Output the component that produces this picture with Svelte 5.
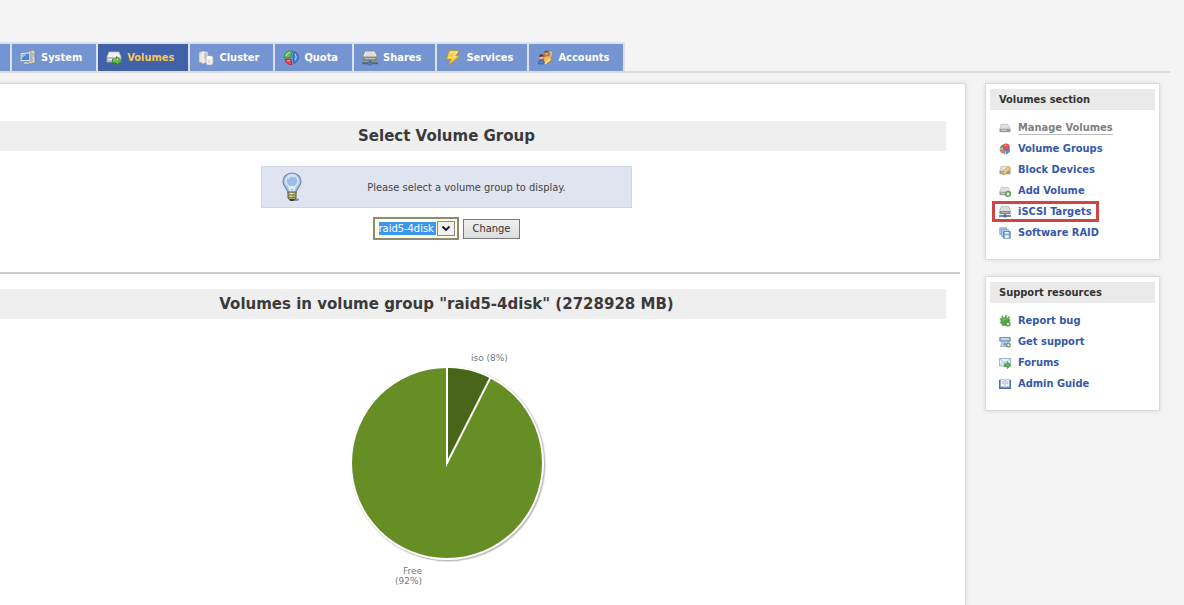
<script lang="ts">
	const tabs = [
		{ label: 'System', icon: 'system' },
		{ label: 'Volumes', icon: 'volumes' },
		{ label: 'Cluster', icon: 'cluster' },
		{ label: 'Quota', icon: 'quota' },
		{ label: 'Shares', icon: 'shares' },
		{ label: 'Services', icon: 'services' },
		{ label: 'Accounts', icon: 'accounts' }
	];

	const sections = [
		{
			title: 'Volumes section',
			links: [
				{ label: 'Manage Volumes', icon: 'drive' },
				{ label: 'Volume Groups', icon: 'groups' },
				{ label: 'Block Devices', icon: 'block' },
				{ label: 'Add Volume', icon: 'add' },
				{ label: 'iSCSI Targets', icon: 'shares' },
				{ label: 'Software RAID', icon: 'raid' }
			]
		},
		{
			title: 'Support resources',
			links: [
				{ label: 'Report bug', icon: 'bug' },
				{ label: 'Get support', icon: 'support' },
				{ label: 'Forums', icon: 'forums' },
				{ label: 'Admin Guide', icon: 'guide' }
			]
		}
	];

	let activeTab = $state('Volumes');
	let current = $state('Manage Volumes');
	let marked = $state('iSCSI Targets');
	let group = $state('raid5-4disk');
</script>

{#snippet drive()}
	<path d="M3 3h9l3 6v4H1V9z" fill="#dededc" stroke="#aaa" stroke-width=".7" />
	<path d="M1 9h14v4.500H1z" fill="#999b9c" />
	<path d="M3 11h7" stroke="#eee" />
{/snippet}

{#snippet icon(name: string)}
	<svg class="icon" viewBox="0 0 16 16" aria-hidden="true">
		{#if name === 'system'}
			<path d="M8 1l5-1 2 1v12l-4 1-3-1z" fill="#d7d9d4" stroke="#777e80" stroke-width=".8" />
			<path d="M12 2v11M13 4h2M13 6h2" stroke="#8f9696" stroke-width=".8" />
			<path d="M1 3.500l9-1v8l-9 .500z" fill="#4d83cf" stroke="#e7ebef" stroke-width="1.300" />
			<path d="M.3 2.800l10.400-1v9.400L.3 11.700z" fill="none" stroke="#64758c" stroke-width=".5" />
			<path d="M2 4.500l5-.500-5 4z" fill="#9cc2ee" />
			<path d="M4 12h4l2 2H3z" fill="#dfe2e4" stroke="#788" stroke-width=".6" />
		{:else if name === 'volumes'}
			<path d="M3 2h10l2 5v5H1V7z" fill="#f0f0ee" stroke="#b9bab8" stroke-width=".7" />
			<path d="M1 7h14v5H1z" fill="#b8babc" />
			<path d="M2.500 9.500h5" stroke="#f4f4f4" stroke-width="1.200" />
			<path d="M6.500 9h4V6.500l5 4.500-5 4.500V13h-4z" fill="#5fb947" stroke="#2c7e26" stroke-width=".8" />
			<path d="M7 10h4.500V8" fill="none" stroke="#b7e59b" stroke-width=".8" />
		{:else if name === 'cluster'}
			<path d="M1 2.500L5 1l5 1v10l-5 1.500L1 12z" fill="#e4e5e4" stroke="#a0a3a5" stroke-width=".7" />
			<path d="M5 1.500v12" stroke="#fafafa" />
			<path d="M6 4h3M6 6h3M6 8h3" stroke="#9a9d9f" stroke-width=".8" />
			<rect x="8" y="6" width="7" height="9" rx="2" fill="#f1f1ef" stroke="#b0b1b1" stroke-width=".8" />
			<ellipse cx="11.500" cy="7.500" rx="3" ry="1.200" fill="#fff" />
			<path d="M11 10v3" stroke="#c9cac9" />
		{:else if name === 'quota'}
			<path d="M7.500 7.500L1 8C1 3 5 .5 9.500 1z" fill="#64bb58" stroke="#2c8740" stroke-width=".7" />
			<path d="M3 6q1-3 4-4" fill="none" stroke="#caedb4" />
			<path d="M10 7l1-5.500c6 2 6 9 0 12z" fill="#4d84d4" stroke="#24539d" stroke-width=".7" />
			<path d="M12 4q2.500 3 0 6" fill="none" stroke="#b5d3f4" />
			<path d="M2 9.500L8 9l1 5.500q-5 1-7-5z" fill="#e54840" stroke="#a8232a" stroke-width=".7" />
			<path d="M4 10.800l3-.3" stroke="#f7a9a0" />
		{:else if name === 'shares'}
			<path d="M3 1h10l2 5v4H1V6z" fill="#ececea" stroke="#84878a" stroke-width=".8" />
			<path d="M3.500 3h9M3 5h10" stroke="#c4c5c5" stroke-width=".7" />
			<path d="M1 6.500h14v4.500H1z" fill="#85888b" />
			<path d="M3 8.500h10" stroke="#d0d0d0" stroke-width=".8" />
			<path d="M0 13.200h16M8 10.500V13" stroke="#5f6468" stroke-width="2" />
			<rect x="6" y="12" width="4" height="3" rx="1" fill="#4c80d2" stroke="#345f9f" stroke-width=".5" />
		{:else if name === 'services'}
			<path d="M4 .8h10L10.500 6h4.200L3.500 15.300 6.200 9H1.500z" fill="#f7cf49" stroke="#c49222" stroke-width=".8" />
			<path d="M5 2h7L8.500 6.700h3M3.200 7.800H8" fill="none" stroke="#fff0a0" stroke-width="1.100" />
		{:else if name === 'accounts'}
			<circle cx="9.500" cy="3.300" r="2.300" fill="#dba45e" stroke="#8b5928" stroke-width=".6" />
			<path d="M7 2.500q2-3.500 4.800 0" fill="#74471f" />
			<path d="M7 6.500l6-1 2 4-3 3-6 1z" fill="#f1ba51" stroke="#a76d23" stroke-width=".7" />
			<path d="M12.500 2l2 .8-1 4" fill="none" stroke="#ebc267" stroke-width="1.500" />
			<circle cx="4.500" cy="7" r="2.300" fill="#e8b28b" />
			<path d="M2 7q0-3.500 4-2.500l1 2z" fill="#6b3629" />
			<path d="M1.500 14q-.5-4 3-4.500 3 .500 3 4.500z" fill="#547fc4" stroke="#3d4e84" stroke-width=".6" />
			<path d="M8 14l5-5" stroke="#f9e1a5" stroke-width="1.700" />
		{:else if name === 'groups'}
			<path d="M7 6L1 8q0-5 5-6z" fill="#6eaa60" />
			<circle cx="9.500" cy="5.500" r="4.500" fill="#df5456" stroke="#b34446" stroke-width=".6" />
			<path d="M7 3.500q2-2 4 0" fill="none" stroke="#f6aaa5" />
			<path d="M1 8.500h7v5.500q-6 0-7-5.500z" fill="#bd8580" stroke="#966f6b" stroke-width=".6" />
			<path d="M9 9l5.500-1q.5 5-5 7z" fill="#5c8cd1" stroke="#416faf" stroke-width=".6" />
		{:else if name === 'block'}
			{@render drive()}
			<path d="M5 11L13 3l3 3-8 8H5z" fill="#e9bd68" stroke="#aa8040" stroke-width=".7" />
			<path d="M7 11l6-6" stroke="#fae6aa" />
		{:else if name === 'add'}
			{@render drive()}
			<circle cx="12" cy="12" r="3.700" fill="#59a849" stroke="#3b8234" stroke-width=".7" />
			<path d="M12 9.700v4.600M9.700 12h4.600" stroke="#fff" stroke-width="1.500" />
		{:else if name === 'raid'}
			<path d="M1 1h9v9H1z" fill="#a9c8e7" stroke="#7b9fc7" />
			<path d="M3.500 3.500h9v9h-9z" fill="#bfd7ef" stroke="#6e96c3" />
			<path d="M6 6h9v9H6z" fill="#81a9d7" stroke="#4e7bad" />
			<path d="M8 6.500h5V9H8zM8 11h5v3.500H8z" fill="#edf5fc" />
		{:else if name === 'bug'}
			<path d="M1 5l4 1M4 1l2 5M9 0v5M14 2l-3 5M1 10h4M4 14l3-4M15 6l-3 3" stroke="#5ca64a" stroke-width="2" />
			<path d="M2.500 7q4-6 10-2l1 5q-4 6-9 3z" fill="#5ca64a" stroke="#458f3b" stroke-width=".8" />
			<path d="M5 7q3-3 5-1" fill="none" stroke="#a9d494" />
			<circle cx="12" cy="12" r="3" fill="#68b453" stroke="#2f7b2b" />
			<path d="M12 10v4M10 12h4" stroke="#eefbe9" />
		{:else if name === 'support'}
			<path d="M1 2h14v5H1z" fill="#91b4d9" stroke="#587eac" />
			<path d="M3 4h10" stroke="#edf5fb" stroke-width="1.500" />
			<path d="M4 7h8l2 7H2z" fill="#c4d6e9" stroke="#7893b1" stroke-width=".8" />
			<circle cx="7.500" cy="10.500" r="2" fill="#7d9fc3" />
			<circle cx="12.500" cy="12" r="3" fill="#68a956" stroke="#447e3c" stroke-width=".7" />
			<path d="M12.500 10v4M10.500 12h4" stroke="#fff" />
		{:else if name === 'forums'}
			<path d="M.5 2h15v10H.5z" fill="#edf3f9" stroke="#7aa0c7" />
			<path d="M1 2.500L8 8l7-5.500M1 11.500l5-5" fill="none" stroke="#91aec9" />
			<path d="M7 9h4V6l5 5-5 4.500V13H7z" fill="#61ab4c" stroke="#3c8035" stroke-width=".7" />
		{:else if name === 'guide'}
			<path d="M0 3h16v11H0z" fill="#527fb4" stroke="#335c91" />
			<path d="M2 2q4-1 6 1 2-2 6-1v10q-4-1-6 1-2-2-6-1z" fill="#f1f5f8" stroke="#879db6" stroke-width=".7" />
			<path d="M8 3v10M3.500 5h3M3.500 7h3M9.500 5h3M9.500 7h3" stroke="#8198b0" stroke-width=".8" />
		{:else}
			{@render drive()}
		{/if}
	</svg>
{/snippet}

<div class="page">
	<nav class="tabs">
		<span class="tab stub"></span>
		{#each tabs as tab}
			<a href="#{tab.icon}" class="tab" class:active={tab.label === activeTab} onclick={() => (activeTab = tab.label)}>
				{@render icon(tab.icon)}
				{tab.label}
			</a>
		{/each}
	</nav>

	<div class="columns">
		<main class="panel">
			<section class="select-group">
				<h2>Select Volume Group</h2>
				<div class="notice">
					<svg class="bulb" viewBox="0 0 20 30" aria-hidden="true">
						<ellipse cx="12" cy="27.500" rx="5" ry="1.500" fill="#7f8fab" />
						<path d="M10 1C4.500 1 1 5 1 9.500c0 5 4 6 5 11h8c1-5 5-6 5-11C19 5 15.500 1 10 1z" fill="#aec8eb" stroke="#7286a5" stroke-width="1.200" />
						<circle cx="10" cy="9" r="6" fill="#9cbde8" stroke="#d9e8f8" stroke-width="1.400" />
						<path d="M6 7q2-4 7-2" fill="none" stroke="#c9def6" stroke-width="1.500" />
						<path d="M7 15l2 5M13 15l-2 5M7.500 17l2.500-2 2.500 2" fill="none" stroke="#f5f8fb" stroke-width="1.200" />
						<path d="M6 20h8v6q-1 2.500-4 2.500T6 26z" fill="#b8b470" stroke="#575744" />
						<path d="M6.500 23h7M6.500 25.500h7" stroke="#76785a" />
						<path d="M8 21.500h3M8 24.200h2" stroke="#f1edb4" />
						<path d="M7.500 27h5l-1 2h-3z" fill="#34383a" />
					</svg>
					<p>Please select a volume group to display.</p>
				</div>
				<form onsubmit={(e) => e.preventDefault()}>
					<span class="picker">
						<select bind:value={group} aria-label="Volume group">
							<option>raid5-4disk</option>
						</select>
						<svg viewBox="0 0 18 15" aria-hidden="true">
							<rect x=".5" y=".5" width="17" height="14" fill="#f1f1f1" stroke="#8a8a8a" />
							<path d="M5.500 5.500L9 9l3.500-3.500" fill="none" stroke="#111" stroke-width="1.800" />
						</svg>
					</span>
					<button type="submit">Change</button>
				</form>
			</section>

			<hr />

			<section>
				<h2>Volumes in volume group "{group}" (2728928 MB)</h2>
				<svg class="chart" viewBox="1 0 220 280" role="img" aria-label="Volume group usage">
					<circle cx="112" cy="145" r="98" fill="#e6e6e6" />
					<circle cx="112" cy="145" r="97" fill="#bababa" />
					<circle cx="111" cy="144" r="97" fill="#fff" />
					<circle cx="111" cy="144" r="95" fill="#678e25" />
					<path d="M111 144V49A95 95 0 0 1 154 59.300z" fill="#49651a" />
					<path d="M111 48v96l43.500-85.600" fill="none" stroke="#fff" stroke-width="2" stroke-miterlimit="8" />
					<text x="135" y="42">iso (8%)</text>
					<text x="86" y="255" text-anchor="end">Free</text>
					<text x="86" y="265" text-anchor="end">(92%)</text>
				</svg>
			</section>
		</main>

		<aside>
			{#each sections as section}
				<div class="box">
					<h3>{section.title}</h3>
					<ul>
						{#each section.links as link}
							<li>
								<a
									href="#{link.icon}"
									class:current={link.label === current}
									class:marked={link.label === marked}
								>
									{@render icon(link.icon)}
									<span>{link.label}</span>
								</a>
							</li>
						{/each}
					</ul>
				</div>
			{/each}
		</aside>
	</div>
</div>

<style>
	:global(body) {
		margin: 0;
		background: #f4f4f4;
	}
	.page {
		box-sizing: border-box;
		min-height: 100vh;
		padding-top: 42px;
		display: flex;
		flex-direction: column;
		overflow: hidden;
		font-family: 'DejaVu Sans Condensed', 'DejaVu Sans', Verdana, sans-serif;
		font-size: 11px;
		color: #444;
	}

	/* Tabs */
	.tabs {
		display: flex;
		margin-right: 14px;
		border-bottom: 2px solid #dcdcde;
	}
	.tab {
		display: flex;
		align-items: center;
		gap: 5px;
		height: 27px;
		padding: 0 14px 0 8px;
		border-top: 2px solid #dbe1ee;
		border-right: 2px solid #dbe1ee;
		background: #7594d2;
		color: #fff;
		font-weight: bold;
		text-decoration: none;
	}
	.tab.active {
		background: #4161a8;
		color: #f5c851;
	}
	.tab.stub {
		padding: 0 5px;
		gap: 0;
	}
	.icon {
		width: 16px;
		height: 16px;
		flex-shrink: 0;
	}

	/* Columns */
	.columns {
		flex: 1;
		display: flex;
		align-items: stretch;
		gap: 19px;
		padding: 10px 24px 0 0;
	}
	.panel {
		flex: 1;
		margin-left: -73px;
		padding: 0 5px;
		background: #fff;
		border: 1px solid #dcdcdc;
		border-bottom: none;
		box-shadow: 0 0 4px #d4d4d4;
	}
	section {
		padding: 15px 14px 0;
	}
	.select-group {
		padding-top: 37px;
		padding-bottom: 32px;
	}
	h2 {
		margin: 0;
		background: #efefef;
		color: #3a3a3a;
		font-family: 'DejaVu Sans', Verdana, sans-serif;
		font-size: 15px;
		line-height: 30px;
		text-align: center;
	}
	hr {
		margin: 0;
		border: none;
		border-top: 2px solid #ccc;
	}
	.notice {
		display: flex;
		align-items: center;
		box-sizing: border-box;
		width: 371px;
		height: 42px;
		margin: 15px auto 9px;
		padding-left: 20px;
		background: #e0e4f1;
		border: 1px solid #d0d6e6;
	}
	.bulb {
		width: 20px;
		height: 30px;
	}
	.notice p {
		flex: 1;
		margin: 0;
		text-align: center;
	}

	/* Group picker */
	form {
		display: flex;
		justify-content: center;
		align-items: center;
		gap: 4px;
	}
	.picker {
		position: relative;
		display: flex;
	}
	.picker svg {
		position: absolute;
		top: 4px;
		right: 4px;
		width: 18px;
		height: 15px;
		pointer-events: none;
	}
	select {
		appearance: none;
		box-sizing: border-box;
		width: 86px;
		height: 23px;
		margin: 0;
		padding: 3px 21px 3px 4px;
		border: 2px solid #8b8b78;
		border-radius: 0;
		background: linear-gradient(#3c97ef, #3c97ef) content-box, #ffffe1;
		color: #fff;
		font: inherit;
		line-height: 13px;
	}
	button {
		height: 20px;
		padding: 0 9px;
		border: 1px solid #777;
		background: linear-gradient(#f0f0f0, #dcdcdc);
		color: #333;
		font: inherit;
	}

	.chart {
		display: block;
		width: 220px;
		height: 280px;
		margin: 0 auto;
	}
	.chart text {
		font-family: 'DejaVu Sans', Verdana, sans-serif;
		font-size: 9px;
		fill: #777;
	}

	/* Sidebar */
	aside {
		width: 175px;
		flex-shrink: 0;
		display: flex;
		flex-direction: column;
		gap: 16px;
	}
	.box {
		box-sizing: border-box;
		padding: 5px 4px 16px;
		background: #fff;
		border: 1px solid #dcdcdc;
		box-shadow: 0 0 4px #d8d8d8;
	}
	h3 {
		margin: 0 0 7px;
		padding: 0 9px;
		background: #eaeaea;
		color: #333;
		font-size: 11px;
		line-height: 21px;
	}
	ul {
		margin: 0;
		padding: 0 5px;
		list-style: none;
	}
	li {
		display: flex;
		align-items: center;
		height: 21px;
	}
	li a {
		display: flex;
		align-items: center;
		gap: 7px;
		padding: 0 4px;
		line-height: 15px;
		color: #3559a9;
		font-weight: bold;
		text-decoration: none;
	}
	li .icon {
		width: 12px;
		height: 12px;
	}
	li .current {
		color: #808080;
	}
	.current span {
		line-height: 13px;
		border-bottom: 1px solid #bbb;
	}
	.marked {
		outline: 3px solid #d24444;
	}
</style>
